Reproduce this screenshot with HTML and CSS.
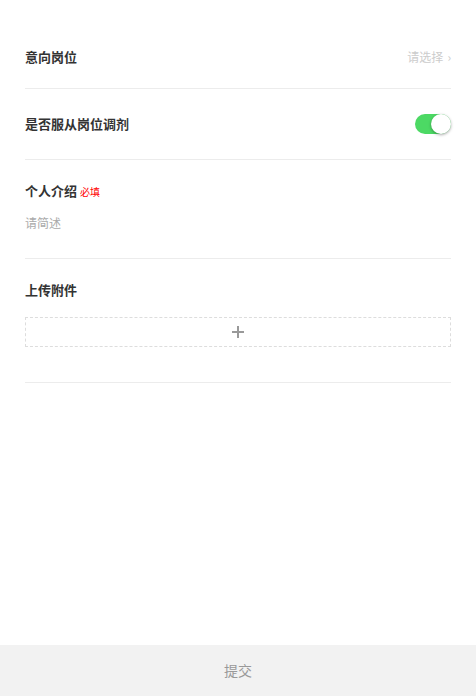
FILE: index.html
```html
<!DOCTYPE html>
<html lang="zh-CN">
<head>
  <meta charset="UTF-8">
  <title>求职申请</title>
  <meta name="viewport" content="width=device-width, initial-scale=1.0">
  <link rel="stylesheet" href="styles.css">
</head>
<body>
  <div class="page">
    <!-- 申请表单 -->
    <div class="form">
      <div class="row">
        <span class="label">意向岗位</span>
        <span class="picker">请选择<span class="arrow">›</span></span>
      </div>

      <div class="row">
        <span class="label">是否服从岗位调剂</span>
        <span class="switch on"><span class="knob"></span></span>
      </div>

      <div class="row block">
        <div class="label">个人介绍<span class="required">必填</span></div>
        <textarea class="intro" placeholder="请简述"></textarea>
      </div>

      <div class="row block">
        <div class="label">上传附件</div>
        <div class="upload">
          <svg width="12" height="12" viewBox="0 0 12 12">
            <path d="M6 0v12M0 6h12" stroke="#999" stroke-width="2" fill="none"/>
          </svg>
        </div>
      </div>
    </div>

    <!-- 提交按钮 -->
    <div class="footer">提交</div>
  </div>
</body>
</html>
```

FILE: styles.css
```css
/* 기본 리셋 */
html, body {
  margin: 0;
  padding: 0;
  height: 100%;
  background-color: #ffffff;
  font-family: 'Noto Sans CJK SC', 'Noto Sans', sans-serif;
  box-sizing: border-box;
}
*, *::before, *::after {
  box-sizing: inherit;
}
.page {
  min-height: 100%;
  display: flex;
  flex-direction: column;
}
.form {
  flex: 1;
  padding: 26px 25px 0 25px;
}
/* 表单行 */
.row {
  display: flex;
  justify-content: space-between;
  align-items: center;
  padding: 21px 0;
  border-bottom: 1px solid #ececec;
}
.row.block {
  display: block;
}
.label {
  font-size: 13px;
  line-height: 20px;
  font-weight: bold;
  color: #333;
}
.required {
  font-size: 10px;
  font-weight: normal;
  color: #ff0000;
  margin-left: 3px;
}
.picker {
  font-size: 12px;
  line-height: 20px;
  color: #cccccc;
}
.picker .arrow {
  margin-left: 4px;
  font-size: 12px;
}
/* 开关 */
.switch {
  display: flex;
  justify-content: flex-end;
  width: 36px;
  height: 20px;
  margin: 4px 0;
  border-radius: 10px;
  background-color: #e5e5e5;
}
.switch.on {
  background-color: #4cd964;
}
.knob {
  width: 20px;
  height: 20px;
  border-radius: 50%;
  background-color: #fff;
  box-shadow: 0 1px 3px rgba(0, 0, 0, 0.35);
}
.intro {
  display: block;
  width: 100%;
  height: 24px;
  margin-top: 11px;
  padding: 0;
  border: none;
  outline: none;
  resize: none;
  font-family: inherit;
  font-size: 12px;
  line-height: 20px;
  color: #333;
}
.intro::placeholder {
  color: #aaaaaa;
}
.upload {
  display: flex;
  justify-content: center;
  align-items: center;
  height: 30px;
  margin-top: 17px;
  margin-bottom: 14px;
  border: 1px dashed #dddddd;
}
.footer {
  height: 51px;
  line-height: 51px;
  text-align: center;
  font-size: 14px;
  color: #999;
  background-color: #f2f2f2;
}
```
